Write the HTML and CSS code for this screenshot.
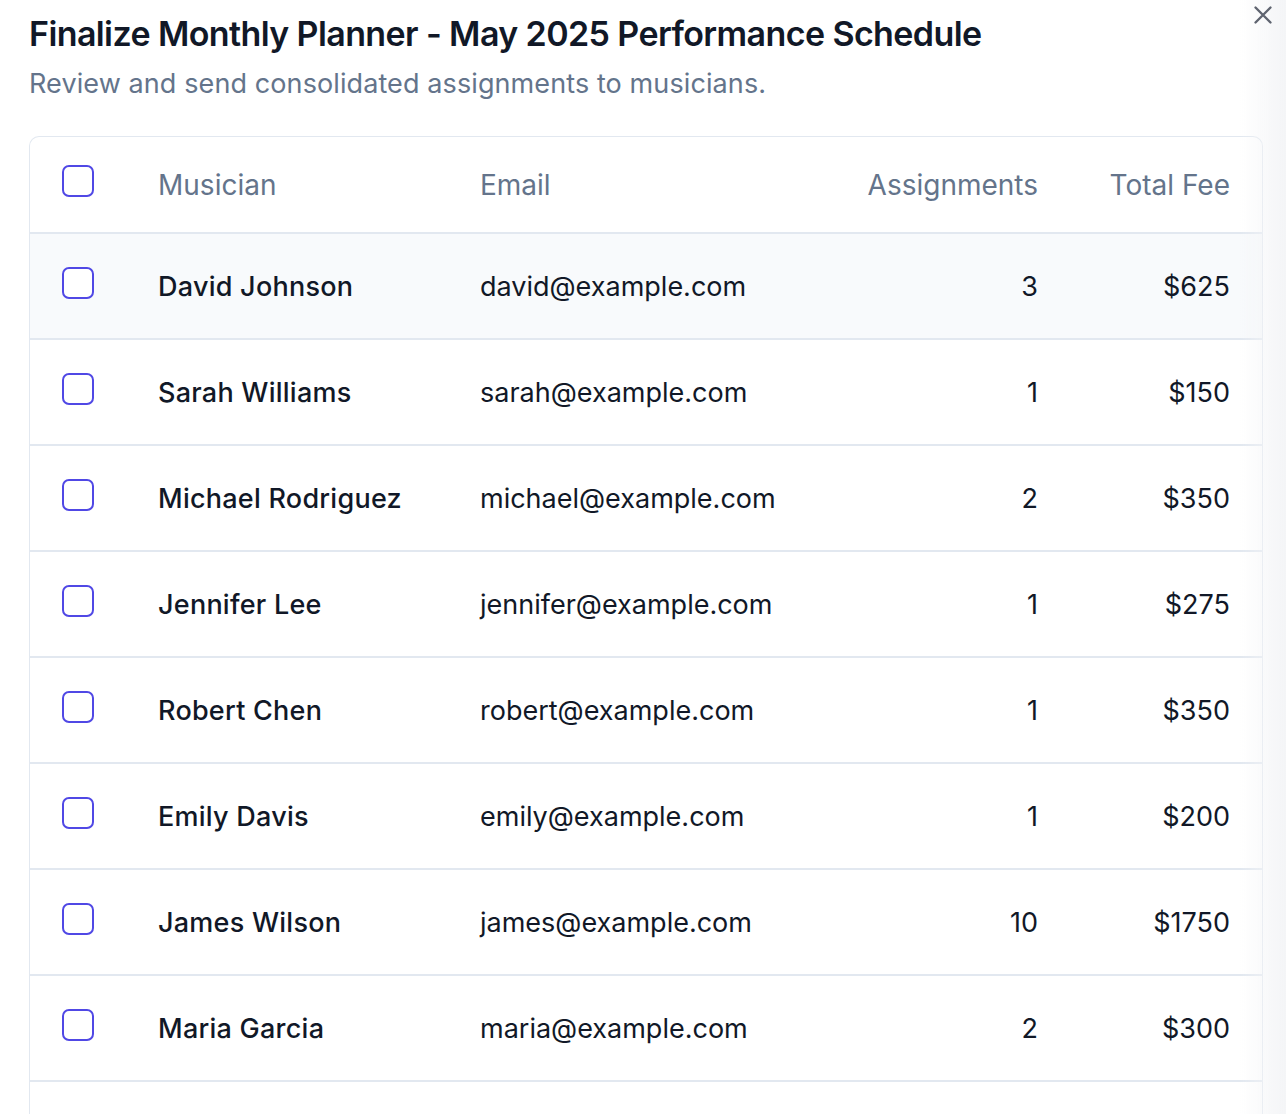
FILE: index.html
```html
<!DOCTYPE html>
<html lang="en">
<head>
<meta charset="utf-8">
<title>Finalize Monthly Planner</title>
<link rel="stylesheet" href="styles.css">
</head>
<body>
<div class="modal">
  <button class="close" aria-label="Close">
    <svg width="20" height="20" viewBox="0 0 20 20" fill="none" stroke="currentColor" stroke-width="2.4" stroke-linecap="round"><path d="M2.5 2.5L17.5 17.5M17.5 2.5L2.5 17.5"/></svg>
  </button>
  <h1 class="title">Finalize Monthly Planner - May 2025 Performance Schedule</h1>
  <p class="subtitle">Review and send consolidated assignments to musicians.</p>

  <div class="table">
    <div class="row head">
      <div class="cell"><span class="check"></span></div>
      <div class="cell">Musician</div>
      <div class="cell">Email</div>
      <div class="cell num">Assignments</div>
      <div class="cell num">Total Fee</div>
    </div>
    <div class="row body hover">
      <div class="cell"><span class="check"></span></div>
      <div class="cell name">David Johnson</div>
      <div class="cell">david@example.com</div>
      <div class="cell num">3</div>
      <div class="cell num">$625</div>
    </div>
    <div class="row body">
      <div class="cell"><span class="check"></span></div>
      <div class="cell name">Sarah Williams</div>
      <div class="cell">sarah@example.com</div>
      <div class="cell num">1</div>
      <div class="cell num">$150</div>
    </div>
    <div class="row body">
      <div class="cell"><span class="check"></span></div>
      <div class="cell name">Michael Rodriguez</div>
      <div class="cell">michael@example.com</div>
      <div class="cell num">2</div>
      <div class="cell num">$350</div>
    </div>
    <div class="row body">
      <div class="cell"><span class="check"></span></div>
      <div class="cell name">Jennifer Lee</div>
      <div class="cell">jennifer@example.com</div>
      <div class="cell num">1</div>
      <div class="cell num">$275</div>
    </div>
    <div class="row body">
      <div class="cell"><span class="check"></span></div>
      <div class="cell name">Robert Chen</div>
      <div class="cell">robert@example.com</div>
      <div class="cell num">1</div>
      <div class="cell num">$350</div>
    </div>
    <div class="row body">
      <div class="cell"><span class="check"></span></div>
      <div class="cell name">Emily Davis</div>
      <div class="cell">emily@example.com</div>
      <div class="cell num">1</div>
      <div class="cell num">$200</div>
    </div>
    <div class="row body">
      <div class="cell"><span class="check"></span></div>
      <div class="cell name">James Wilson</div>
      <div class="cell">james@example.com</div>
      <div class="cell num">10</div>
      <div class="cell num">$1750</div>
    </div>
    <div class="row body">
      <div class="cell"><span class="check"></span></div>
      <div class="cell name">Maria Garcia</div>
      <div class="cell">maria@example.com</div>
      <div class="cell num">2</div>
      <div class="cell num">$300</div>
    </div>
    <div class="row filler"></div>
  </div>
</div>
</body>
</html>
```
FILE: styles.css
```css
* { box-sizing: border-box; }
html, body { margin: 0; padding: 0; background: #ffffff; }
body {
  font-family: Inter, "Noto Sans", "Liberation Sans", sans-serif;
  color: #111827;
}
body::after {
  content: "";
  position: fixed;
  top: 0;
  right: 0;
  width: 46px;
  height: 100%;
  background: linear-gradient(to right, rgba(244, 245, 247, 0), #f4f5f7);
  pointer-events: none;
}
.modal {
  position: relative;
  padding: 12px 23px 0 29px;
}
.close {
  position: absolute;
  z-index: 2;
  top: 5px;
  right: 13px;
  border: 0;
  background: none;
  padding: 0;
  color: #5f6470;
  width: 20px;
  height: 20px;
  display: flex;
}
.title {
  margin: 0;
  font-size: 34px;
  line-height: 44px;
  font-weight: 600;
  letter-spacing: -0.6px;
  color: #111827;
}
.subtitle {
  margin: 10px 0 0;
  font-size: 27px;
  line-height: 36px;
  letter-spacing: 0.1px;
  color: #64748b;
  font-weight: 400;
}
.table {
  margin-top: 34px;
  border: 1px solid #e2e8f0;
  border-bottom: 0;
  border-radius: 10px 10px 0 0;
}
.row {
  display: grid;
  grid-template-columns: 96px 322px 1fr 200px 192px;
  align-items: center;
  padding: 0 32px 0 32px;
  height: 106px;
  border-bottom: 2px solid #e2e8f0;
  font-size: 27px;
  line-height: 36px;
  color: #111827;
}
.row.body { padding-top: 2px; }
.row.head {
  height: 97px;
  font-size: 28px;
  color: #64748b;
  font-weight: 400;
}
.row.hover { background: #f8fafc; }
.row.filler { height: 60px; border-bottom: 0; }
.cell { white-space: nowrap; }
.cell.name { font-weight: 500; letter-spacing: 0.25px; }
.cell.num { text-align: right; }
.check {
  display: block;
  width: 32px;
  height: 32px;
  margin-bottom: 8px;
  border: 2px solid #5048e5;
  border-radius: 7px;
  background: #fff;
}
```
